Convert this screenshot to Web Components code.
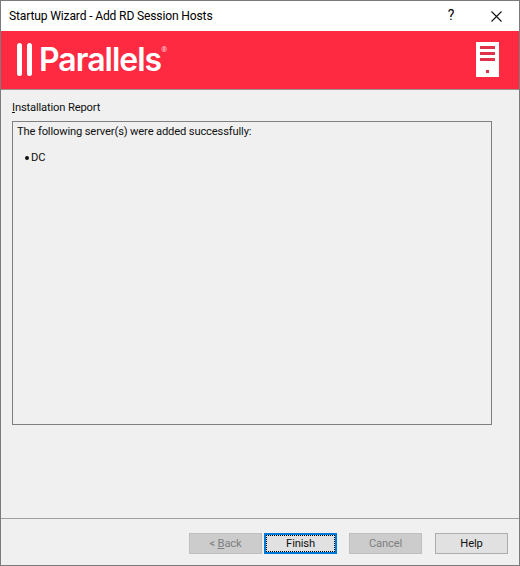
<!DOCTYPE html>
<html>
<head>
<meta charset="utf-8">
<title>Startup Wizard</title>
<style>
  html, body { margin: 0; background: #f0f0f0; }
  body { font: 11.2px/16px Roboto, "Noto Sans", sans-serif; letter-spacing: -.16px; color: #000; }
  li { display: flex; align-items: center; gap: 2px; }
  li::before { content: ""; width: 4px; height: 4px; border-radius: 50%; background: #111; }
</style>
</head>
<body>
<wizard-window>
  <title-bar slot="title">Startup Wizard - Add RD Session Hosts</title-bar>
  <brand-banner slot="banner"></brand-banner>
  <report-panel>
    <span slot="heading"><u>I</u>nstallation Report</span>
    <p>The following server(s) were added successfully:</p>
    <ul><li>DC</li></ul>
  </report-panel>
  <button-bar slot="footer">
    <wizard-button disabled>&lt;&nbsp;<u>B</u>ack</wizard-button>
    <wizard-button focused>Finish</wizard-button>
    <wizard-button disabled style="margin-left:10px">Cancel</wizard-button>
    <wizard-button style="margin-left:11px">Help</wizard-button>
  </button-bar>
</wizard-window>

<script>
class WizardWindow extends HTMLElement {
  connectedCallback() {
    this.attachShadow({ mode: "open" });
    this.shadowRoot.innerHTML = `
      <style>
        :host {
          display: flex;
          flex-direction: column;
          box-sizing: border-box;
          width: 520px;
          height: 566px;
          border: 1px solid #7b7b7b;
          background: #f0f0f0;
        }
        main { flex: 1; min-height: 0; }
      </style>
      <slot name="title"></slot>
      <slot name="banner"></slot>
      <main><slot></slot></main>
      <slot name="footer"></slot>
    `;
  }
}

class TitleBar extends HTMLElement {
  connectedCallback() {
    this.attachShadow({ mode: "open" });
    this.shadowRoot.innerHTML = `
      <style>
        :host {
          display: flex;
          align-items: center;
          height: 30px;
          padding-left: 8px;
          background: #fff;
          font-size: 12.1px;
          color: #000;
        }
        .text { flex: 1; padding-bottom: 1px; }
        .help { width: 46px; text-align: center; font-size: 14px; padding-bottom: 2px; margin-left: 5px; }
        .close { width: 45px; height: 30px; display: flex; align-items: center; justify-content: center; }
      </style>
      <span class="text"><slot></slot></span>
      <span class="help">?</span>
      <span class="close">
        <svg width="11" height="11" viewBox="0 0 11 11">
          <path d="M.5 .5l10 10M10.5 .5l-10 10" stroke="#111" stroke-width="1.1" fill="none"/>
        </svg>
      </span>
    `;
  }
}

class BrandBanner extends HTMLElement {
  connectedCallback() {
    this.attachShadow({ mode: "open" });
    this.shadowRoot.innerHTML = `
      <style>
        :host {
          display: flex;
          align-items: center;
          box-sizing: border-box;
          height: 59px;
          padding: 0 20px 0 16px;
          background: #fe2a42;
          border-bottom: 1px solid #9c8f90;
          color: #fff;
        }
        .bars { display: flex; gap: 5px; margin-top: -1px; }
        .bars i { width: 5px; height: 33px; border-radius: 3px; background: #fff; }
        .word {
          margin-left: 7px;
          font: 600 32px/32px "Inter", sans-serif;
          letter-spacing: -1px;
          margin-top: -1px;
        }
        .reg {
          align-self: flex-start;
          margin-top: 15px;
          font: 7px/8px "Noto Sans", sans-serif;
          letter-spacing: 0;
          opacity: .85;
        }
        svg { margin-left: auto; margin-top: -1px; }
      </style>
      <span class="bars"><i></i><i></i></span>
      <span class="word">Parallels</span>
      <span class="reg">®</span>
      <svg width="23" height="35" viewBox="0 0 23 35">
        <rect width="23" height="35" fill="#fff"/>
        <rect x="4" y="4" width="15" height="3" fill="#e0324a"/>
        <rect x="4" y="10" width="15" height="3" fill="#e0324a"/>
        <rect x="4" y="16" width="15" height="3" fill="#e0324a"/>
        <rect x="10" y="28" width="3" height="3" fill="#e0324a"/>
      </svg>
    `;
  }
}

class ReportPanel extends HTMLElement {
  connectedCallback() {
    this.attachShadow({ mode: "open" });
    this.shadowRoot.innerHTML = `
      <style>
        :host { display: block; padding: 10px 27px 0 11px; }
        .heading { height: 21px; line-height: 16px; color: #111; }
        .box {
          box-sizing: border-box;
          height: 304px;
          border: 1px solid #7f7f7f;
          padding: 2px 4px;
          color: #111;
        }
        ::slotted(p) { margin: 0 0 10px; }
        ::slotted(ul) {
          margin: 0;
          padding: 0 0 0 8px;
          list-style: none;
        }
      </style>
      <div class="heading"><slot name="heading"></slot></div>
      <div class="box"><slot></slot></div>
    `;
  }
}

class ButtonBar extends HTMLElement {
  connectedCallback() {
    this.attachShadow({ mode: "open" });
    this.shadowRoot.innerHTML = `
      <style>
        :host {
          display: flex;
          justify-content: flex-end;
          gap: 2px;
          box-sizing: border-box;
          height: 47px;
          padding: 14px 11px 0 0;
          border-top: 1px solid #a0a0a0;
        }
      </style>
      <slot></slot>
    `;
  }
}

class WizardButton extends HTMLElement {
  connectedCallback() {
    this.attachShadow({ mode: "open" });
    this.shadowRoot.innerHTML = `
      <style>
        :host {
          display: flex;
          align-items: center;
          justify-content: center;
          box-sizing: border-box;
          width: 73px;
          height: 21px;
          padding-top: 1px;
          border: 1px solid #adadad;
          background: #e1e1e1;
          color: #111;
        }
        :host([disabled]) {
          background: #ccc;
          border-color: #bfbfbf;
          color: #7f7f7f;
        }
        :host([focused]) {
          border: 2px solid #0078d7;
          outline: 1px dotted #000;
          outline-offset: -3px;
        }
      </style>
      <slot></slot>
    `;
  }
}

customElements.define("wizard-window", WizardWindow);
customElements.define("title-bar", TitleBar);
customElements.define("brand-banner", BrandBanner);
customElements.define("report-panel", ReportPanel);
customElements.define("button-bar", ButtonBar);
customElements.define("wizard-button", WizardButton);
</script>
</body>
</html>
